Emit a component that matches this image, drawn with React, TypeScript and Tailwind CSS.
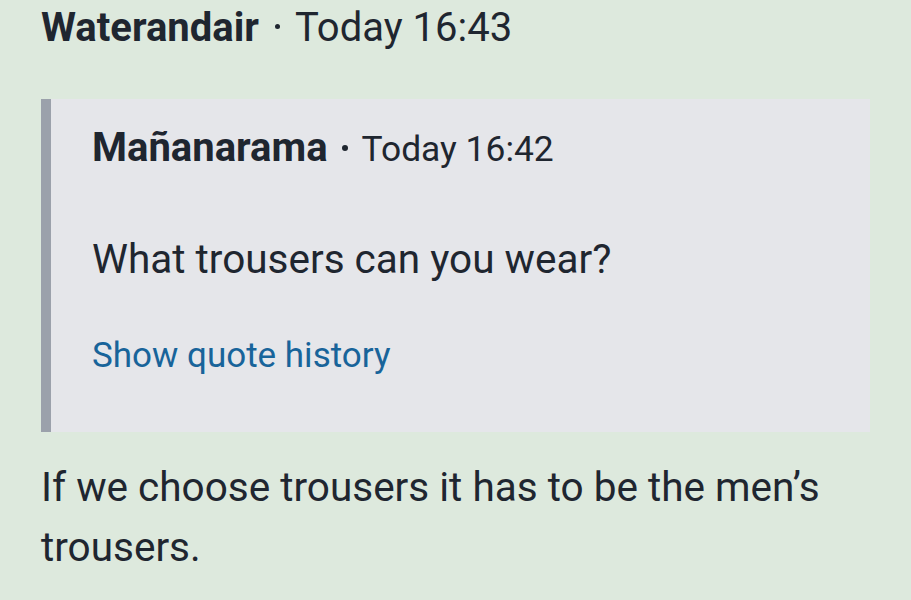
export default function App() {
  return (
    <div
      className="min-h-[600px] w-[911px] overflow-hidden bg-[#dde9dd] px-[41px] text-[#1f2630]"
      style={{ fontFamily: "Roboto, 'Liberation Sans', sans-serif" }}
    >
      {/* Post header */}
      <div className="pt-[4px] text-[40px] leading-[48px]">
        <span className="font-bold">Waterandair</span>
        <span className="ml-[16px] mr-[15px] inline-block h-[5px] w-[5px] rounded-full bg-current align-[12px]" />
        <span>Today 16:43</span>
      </div>

      {/* Quote */}
      <div className="mt-[47px] border-l-[10px] border-[#9ba1ab] bg-[#e5e6ea] pb-[54px] pl-[41px] pr-6 pt-[25px]">
        <div className="text-[40px] leading-[48px]">
          <span className="font-bold">Mañanarama</span>
          <span className="ml-[14px] mr-[14px] inline-block h-[6px] w-[6px] rounded-full bg-current align-[10px]" />
          <span className="text-[35.4px]">Today 16:42</span>
        </div>
        <p className="mt-[62px] text-[40.5px] leading-[48px]">What trousers can you wear?</p>
        <a href="#" className="mt-[51px] block text-[35px] leading-[44px] text-[#18649a]">
          Show quote history
        </a>
      </div>

      {/* Reply body */}
      <p className="mt-[25px] text-[40.5px] leading-[60px]">
        If we choose trousers it has to be the men’s trousers.
      </p>
    </div>
  );
}
